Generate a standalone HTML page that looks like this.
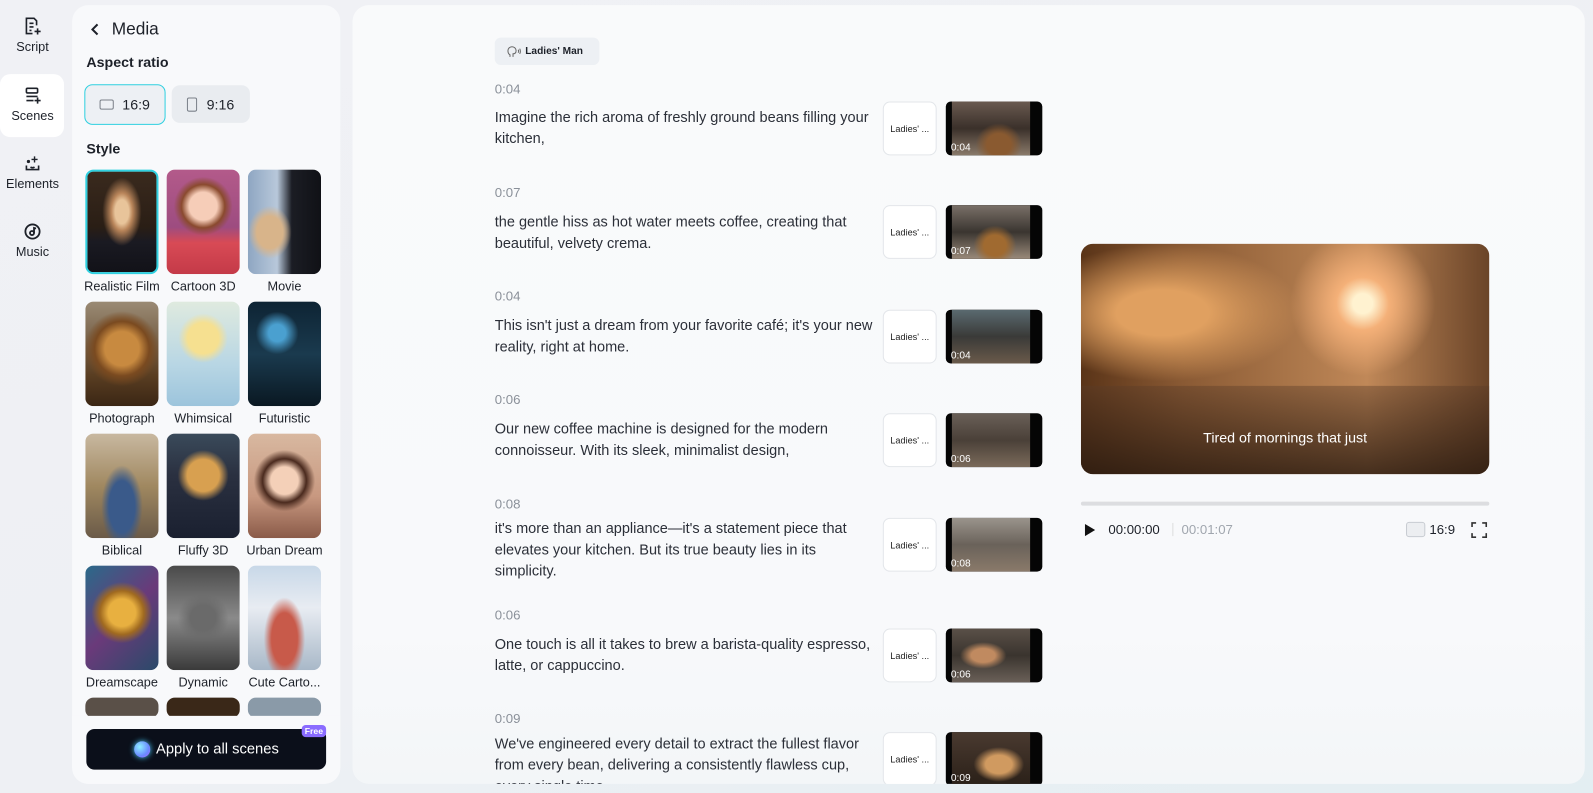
<!DOCTYPE html>
<html><head><meta charset="utf-8"><style>
*{box-sizing:border-box;margin:0;padding:0}
html,body{width:1593px;height:793px;overflow:hidden}
body{font-family:"Liberation Sans",sans-serif;background:linear-gradient(160deg,#f0f1f5 0%,#eef0f4 60%,#e3eef2 100%);position:relative;color:#1d2129}
#w{position:absolute;left:0;top:0;width:1568px;height:781px;transform:scale(1.0159,1.0154);transform-origin:0 0}
.abs{position:absolute}
.nav{position:absolute;left:0;width:64px;text-align:center;font-size:12.5px;color:#1d2129}
.nav svg{display:block;margin:0 auto 4px}
.panel{position:absolute;left:71px;top:5px;width:264px;height:767px;background:#f8f9fb;border-radius:16px;overflow:hidden}
.main{position:absolute;left:347px;top:5px;width:1213px;height:767px;background:linear-gradient(180deg,#f9fafb,#f8f9fb 80%,#f3f6f8);border-radius:16px;overflow:hidden}
.tile{position:absolute;width:72px;height:103px;border-radius:8px;overflow:hidden}
.lbl{position:absolute;width:80px;text-align:center;font-size:12.5px;color:#1d2129;white-space:nowrap}
.time{position:absolute;left:140px;font-size:13px;color:#8a9099}
.txt{position:absolute;left:140px;width:376px;font-size:14.3px;line-height:21px;color:#2b2f38}
.vb{position:absolute;left:522px;width:53px;height:53px;border:1px solid #e3e6ea;border-radius:7px;background:#fff;font-size:9px;color:#222;display:flex;align-items:center;justify-content:center}
.th{position:absolute;left:584px;width:95px;height:53px;border-radius:5px;background:#050505;overflow:hidden}
.th i{position:absolute;left:6px;right:12px;top:0;bottom:0;display:block}
.th b{position:absolute;left:5px;bottom:2px;font-size:10px;color:#fff;font-weight:normal}
</style></head><body><div id="w">

<div class="nav" style="top:17px">
<svg width="18" height="18" viewBox="0 0 18 18" fill="none" stroke="#1d2129" stroke-width="1.6"><path d="M13 8V3.5L10.5 1H3v15h6"/><path d="M6 6h4M6 9.5h4M6 13h2"/><path d="M14 11v6M11 14h6"/></svg>Script</div>
<div class="abs" style="left:0;top:73px;width:63px;height:62px;background:#fff;border-radius:10px"></div>
<div class="nav" style="top:85px">
<svg width="18" height="18" viewBox="0 0 18 18" fill="none" stroke="#1d2129" stroke-width="1.6"><rect x="3" y="2" width="11" height="4.5" rx="1"/><path d="M3 10h11M3 14h7M14 11v6M11 14h6"/></svg>Scenes</div>
<div class="nav" style="top:152px">
<svg width="18" height="18" viewBox="0 0 18 18" fill="none" stroke="#1d2129" stroke-width="1.6"><path d="M3 11v4h12v-4"/><path d="M7 12.5c1.5 1 2.5 1 4 0"/><path d="M11 2v6M8 5h6" stroke-width="1.4"/><circle cx="5" cy="7" r=".8" fill="#1d2129"/></svg>Elements</div>
<div class="nav" style="top:219px">
<svg width="18" height="18" viewBox="0 0 18 18" fill="none" stroke="#1d2129" stroke-width="1.8"><circle cx="9" cy="9" r="7"/><circle cx="8.5" cy="10.5" r="2"/><path d="M10.5 10.5V5.5l2 .5"/></svg>Music</div>

<div class="panel">
<svg class="abs" style="left:17px;top:17px" width="12" height="14" viewBox="0 0 12 14" fill="none" stroke="#1d2129" stroke-width="2"><path d="M8 2L3 7l5 5"/></svg>
<div class="abs" style="left:39px;top:14px;font-size:17px;font-weight:500">Media</div>
<div class="abs" style="left:14px;top:48px;font-size:14px;font-weight:bold;color:#1d2129">Aspect ratio</div>
<div class="abs" style="left:12px;top:78px;width:80px;height:40px;border:1.5px solid #2fd0e0;border-radius:8px;background:#edf0f4;display:flex;align-items:center;justify-content:center;font-size:14px;gap:8px"><span style="width:14px;height:10px;border:1.3px solid #7a8089;border-radius:2px;display:inline-block"></span>16:9</div>
<div class="abs" style="left:98px;top:79px;width:77px;height:37px;border-radius:8px;background:#e9ecf0;display:flex;align-items:center;justify-content:center;font-size:14px;gap:9px"><span style="width:10px;height:14px;border:1.3px solid #7a8089;border-radius:2px;display:inline-block"></span>9:16</div>
<div class="abs" style="left:14px;top:133px;font-size:14px;font-weight:bold">Style</div>

<div class="tile" style="left:13px;top:162px;border:2px solid #2fd0e0;background:radial-gradient(ellipse at 50% 40%,#e8c49a 0 14%,#b9855a 22%,transparent 40%),linear-gradient(180deg,#3a2a1e 0%,#2a1e15 55%,#1a1a22 70%,#121218 100%)"></div>
<div class="tile" style="left:93px;top:162px;background:radial-gradient(circle at 50% 35%,#f6cdb8 0 18%,#8a4a2e 28%,transparent 38%),linear-gradient(180deg,#b35a8a,#9d4c80 55%,#d84a55 70%,#c43a48)"></div>
<div class="tile" style="left:173px;top:162px;background:radial-gradient(ellipse at 30% 60%,#d8b48a 0 18%,transparent 30%),linear-gradient(90deg,#8ea6c2 0,#b8c8da 40%,#1b1d24 60%,#101116)"></div>
<div class="lbl" style="left:9px;top:270px">Realistic Film</div>
<div class="lbl" style="left:89px;top:270px">Cartoon 3D</div>
<div class="lbl" style="left:169px;top:270px">Movie</div>

<div class="tile" style="left:13px;top:292px;background:radial-gradient(circle at 50% 45%,#c88a40 0 25%,#7a4a20 40%,transparent 55%),linear-gradient(180deg,#9a8a74,#5a3e22 70%,#3a2614)"></div>
<div class="tile" style="left:93px;top:292px;background:radial-gradient(circle at 50% 35%,#f6e090 0 20%,transparent 32%),linear-gradient(180deg,#dfeadf,#b8d6e4 60%,#9cc4dc)"></div>
<div class="tile" style="left:173px;top:292px;background:radial-gradient(circle at 40% 30%,#4aa0d0 0 10%,transparent 25%),linear-gradient(180deg,#0e2434,#1a3a4e 50%,#0a1822)"></div>
<div class="lbl" style="left:9px;top:400px">Photograph</div>
<div class="lbl" style="left:89px;top:400px">Whimsical</div>
<div class="lbl" style="left:169px;top:400px">Futuristic</div>

<div class="tile" style="left:13px;top:422px;background:radial-gradient(ellipse at 50% 70%,#3a5a8a 0 25%,transparent 40%),linear-gradient(180deg,#c8b8a0,#a08860 50%,#6a5a48)"></div>
<div class="tile" style="left:93px;top:422px;background:radial-gradient(circle at 50% 40%,#d8a050 0 22%,transparent 35%),linear-gradient(180deg,#3a4a5a,#2a3040 40%,#1a2030)"></div>
<div class="tile" style="left:173px;top:422px;background:radial-gradient(circle at 50% 45%,#f4d0b8 0 20%,#4a2a1e 32%,transparent 45%),linear-gradient(180deg,#d8b8a0,#c89880 60%,#8a5a48)"></div>
<div class="lbl" style="left:9px;top:530px">Biblical</div>
<div class="lbl" style="left:89px;top:530px">Fluffy 3D</div>
<div class="lbl" style="left:169px;top:530px">Urban Dream</div>

<div class="tile" style="left:13px;top:552px;background:radial-gradient(circle at 50% 45%,#e8b040 0 20%,#a06a20 32%,transparent 45%),linear-gradient(135deg,#2a6a8a,#6a3a7a 50%,#2a4a6a)"></div>
<div class="tile" style="left:93px;top:552px;background:radial-gradient(circle at 50% 50%,#6a6a6a 0 20%,transparent 40%),linear-gradient(180deg,#4a4a4a,#8a8a8a 50%,#3a3a3a)"></div>
<div class="tile" style="left:173px;top:552px;background:radial-gradient(ellipse at 50% 70%,#c85a4a 0 25%,transparent 40%),linear-gradient(180deg,#c8d8e8,#e8ecf2 40%,#a8b8c8)"></div>
<div class="lbl" style="left:9px;top:660px">Dreamscape</div>
<div class="lbl" style="left:89px;top:660px">Dynamic</div>
<div class="lbl" style="left:169px;top:660px">Cute Carto...</div>

<div class="tile" style="left:13px;top:682px;height:20px;background:#5a5048"></div>
<div class="tile" style="left:93px;top:682px;height:20px;background:#3a2818"></div>
<div class="tile" style="left:173px;top:682px;height:20px;background:#8a9aa8"></div>
<div class="abs" style="left:0;top:700px;width:264px;height:67px;background:#f8f9fb"></div>

<div class="abs" style="left:14px;top:713px;width:236px;height:40px;background:#0b0f1a;border-radius:8px;display:flex;align-items:center;justify-content:center;gap:6px;color:#fff;font-size:14.5px">
<span style="width:16px;height:16px;border-radius:50%;background:radial-gradient(circle at 35% 35%,#8ef0ff,#6a8aff 60%,#b060ff);box-shadow:0 0 6px #4ad0ff"></span>Apply to all scenes</div>
<div class="abs" style="left:226px;top:709px;width:24px;height:12px;background:#8a6cff;border-radius:4px;color:#fff;font-size:8.5px;font-weight:bold;text-align:center;line-height:12px">Free</div>
</div>

<div class="main">
<div class="abs" style="left:140px;top:32px;width:103px;height:27px;background:#edf0f4;border-radius:6px;font-size:10px;font-weight:bold;display:flex;align-items:center;padding-left:12px;gap:4px">
<svg width="14" height="12" viewBox="0 0 14 12" fill="none" stroke="#666" stroke-width="1"><path d="M3 11V9C1 8 1 6 1 5a4 4 0 018 0c0 2-1 3-3 3v3"/><path d="M11 4c.6.7.6 2 0 3M12.5 3c1 1.3 1 3.7 0 5"/></svg>Ladies' Man</div>

<div class="time" style="top:75px">0:04</div>
<div class="txt" style="top:101px">Imagine the rich aroma of freshly ground beans filling your kitchen,</div>
<div class="vb" style="top:95px">Ladies' ...</div>
<div class="th" style="top:95px"><i style="background:radial-gradient(ellipse at 60% 80%,#8a5a30 0 18%,transparent 35%),linear-gradient(180deg,#6a5a50,#3a302a 50%,#8a7a6a)"></i><b>0:04</b></div>

<div class="time" style="top:177px">0:07</div>
<div class="txt" style="top:204px">the gentle hiss as hot water meets coffee, creating that beautiful, velvety crema.</div>
<div class="vb" style="top:197px">Ladies' ...</div>
<div class="th" style="top:197px"><i style="background:radial-gradient(ellipse at 55% 75%,#a06a30 0 18%,transparent 35%),linear-gradient(180deg,#7a7068,#3a3530 50%,#9a8a7a)"></i><b>0:07</b></div>

<div class="time" style="top:279px">0:04</div>
<div class="txt" style="top:306px">This isn't just a dream from your favorite café; it's your new reality, right at home.</div>
<div class="vb" style="top:300px">Ladies' ...</div>
<div class="th" style="top:300px"><i style="background:linear-gradient(180deg,#5a6a70,#3a3a38 50%,#6a5a4a)"></i><b>0:04</b></div>

<div class="time" style="top:381px">0:06</div>
<div class="txt" style="top:408px">Our new coffee machine is designed for the modern connoisseur. With its sleek, minimalist design,</div>
<div class="vb" style="top:402px">Ladies' ...</div>
<div class="th" style="top:402px"><i style="background:linear-gradient(180deg,#6a6058,#4a4038 50%,#7a6a5a)"></i><b>0:06</b></div>

<div class="time" style="top:484px">0:08</div>
<div class="txt" style="top:506px">it's more than an appliance—it's a statement piece that elevates your kitchen. But its true beauty lies in its simplicity.</div>
<div class="vb" style="top:505px">Ladies' ...</div>
<div class="th" style="top:505px"><i style="background:linear-gradient(180deg,#9a948c,#6a625a 50%,#8a7a6a)"></i><b>0:08</b></div>

<div class="time" style="top:593px">0:06</div>
<div class="txt" style="top:620px">One touch is all it takes to brew a barista-quality espresso, latte, or cappuccino.</div>
<div class="vb" style="top:614px">Ladies' ...</div>
<div class="th" style="top:614px"><i style="background:radial-gradient(ellipse at 40% 50%,#c08a60 0 18%,transparent 35%),linear-gradient(180deg,#5a5048,#3a342e 50%,#6a6058)"></i><b>0:06</b></div>

<div class="time" style="top:695px">0:09</div>
<div class="txt" style="top:718px">We've engineered every detail to extract the fullest flavor from every bean, delivering a consistently flawless cup, every single time.</div>
<div class="vb" style="top:716px">Ladies' ...</div>
<div class="th" style="top:716px"><i style="background:radial-gradient(ellipse at 60% 60%,#d09a60 0 20%,transparent 38%),linear-gradient(180deg,#4a3a30,#2a2018)"></i><b>0:09</b></div>

<div class="abs" style="left:717px;top:235px;width:402px;height:227px;border-radius:12px;overflow:hidden;background:radial-gradient(circle at 69% 26%,#fff2d0 0 3%,#f4b078 8%,transparent 22%),radial-gradient(ellipse at 20% 30%,#e0a060 0 10%,transparent 30%),linear-gradient(90deg,#5a3418 0%,#8a5a34 25%,#a87448 50%,#c08858 70%,#6a4428 100%)">
<div class="abs" style="left:0;top:140px;width:402px;height:87px;background:linear-gradient(180deg,rgba(90,60,40,.4),rgba(40,25,15,.8))"></div>
<div class="abs" style="left:0;top:183px;width:402px;text-align:center;color:#fff;font-size:14px">Tired of mornings that just</div>
</div>
<div class="abs" style="left:717px;top:489px;width:402px;height:4px;background:#dcdde0;border-radius:2px"></div>
<svg class="abs" style="left:720px;top:510px" width="12" height="14" viewBox="0 0 12 14"><path d="M1 1l10 6-10 6z" fill="#111"/></svg>
<div class="abs" style="left:744px;top:509px;font-size:13px;color:#1d2129">00:00:00</div>
<div class="abs" style="left:807px;top:510px;width:1px;height:13px;background:#ddd"></div>
<div class="abs" style="left:816px;top:509px;font-size:13px;color:#a0a6ae">00:01:07</div>
<div class="abs" style="left:1037px;top:509px;width:19px;height:15px;border:1px solid #c8ccd2;border-radius:3px;background:#eceef1"></div>
<div class="abs" style="left:1060px;top:509px;font-size:13px">16:9</div>
<svg class="abs" style="left:1101px;top:509px" width="16" height="16" viewBox="0 0 16 16" fill="none" stroke="#333" stroke-width="1.6"><path d="M1 5V1h4M11 1h4v4M15 11v4h-4M5 15H1v-4"/></svg>
</div>
</div></body></html>
